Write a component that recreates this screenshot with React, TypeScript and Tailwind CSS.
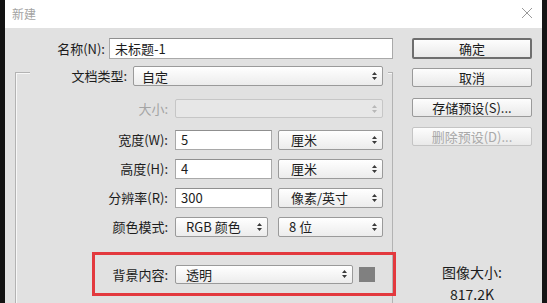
import type { ReactNode } from "react";

function Arrows({ disabled = false }: { disabled?: boolean }) {
  return (
    <svg width="5" height="8" viewBox="0 0 5 8" className="shrink-0">
      <path
        d="M2.5 0 L5 3 H0 Z M2.5 8 L5 5 H0 Z"
        fill={disabled ? "#b8b8b8" : "#3a3a3a"}
      />
    </svg>
  );
}

function Select({
  children,
  className = "",
  disabled = false,
}: {
  children?: ReactNode;
  className?: string;
  disabled?: boolean;
}) {
  return (
    <div
      className={`flex items-center justify-between rounded-[2px] border pr-[5px] ${
        disabled
          ? "border-[#c6c6c6] bg-[#e7e7e7]"
          : "border-[#9a9a9a] bg-[linear-gradient(#ffffff,#ececec)]"
      } ${className}`}
    >
      <span className="whitespace-nowrap leading-none">{children}</span>
      <Arrows disabled={disabled} />
    </div>
  );
}

function Input({ value, className = "" }: { value: string; className?: string }) {
  return (
    <div
      className={`flex items-center border border-[#a9a9a9] border-t-[#8f8f8f] bg-white pl-[5px] leading-none ${className}`}
    >
      {value}
    </div>
  );
}

function Button({
  children,
  primary = false,
  disabled = false,
  className = "",
}: {
  children: ReactNode;
  primary?: boolean;
  disabled?: boolean;
  className?: string;
}) {
  return (
    <div
      className={`flex w-[120px] items-center justify-center rounded-[2px] bg-[linear-gradient(#fdfdfd,#e9e9e9)] leading-none ${
        primary
          ? "border-2 border-[#6e6e6e]"
          : disabled
            ? "border border-[#c4c4c4] text-[#a9a9a9]"
            : "border border-[#9a9a9a]"
      } ${className}`}
    >
      {children}
    </div>
  );
}

function Label({ children, className = "" }: { children: ReactNode; className?: string }) {
  return <span className={`shrink-0 text-right ${className}`}>{children}</span>;
}

export default function App() {
  return (
    <div className="flex h-[303px] w-[547px] overflow-hidden bg-[#121212] font-['Noto_Sans_CJK_SC','Noto_Sans',sans-serif] text-[13px] text-[#1c1c1c]">
      <div className="ml-[5px] flex w-[537px] flex-col">
        {/* title bar */}
        <div className="flex h-[28px] shrink-0 items-center justify-between bg-white pl-[7px] pr-[9px]">
          <span className="text-[12px] text-[#a3a3a3]">新建</span>
          <svg width="12" height="12" viewBox="0 0 12 12" className="mb-[2px]">
            <path d="M1 1 L11 11 M11 1 L1 11" stroke="#9a9a9a" strokeWidth="1" />
          </svg>
        </div>

        <div className="relative flex flex-1 overflow-hidden bg-[#e1e1e1]">
          {/* left column */}
          <div className="flex w-[395px] shrink-0 flex-col">
            <div className="mt-[10px] flex items-center">
              <Label className="w-[104px] pr-[4px]">名称(N):</Label>
              <Input value="未标题-1" className="h-[21px] w-[284px]" />
            </div>

            <div className="ml-[10px] mt-[13px] flex w-[378px] flex-col border-l border-r border-t border-[#b3b3b3] pb-[40px] shadow-[inset_1px_1px_0_#f7f7f7]">
              <div className="-mt-[7px] flex">
                <div className="ml-[14px] flex items-center bg-[#e1e1e1] pr-[5px]">
                  <Label className="w-[103px] pr-[6px]">文档类型:</Label>
                  <Select className="h-[20px] w-[250px] pl-[8px]">自定</Select>
                </div>
              </div>

              <div className="mt-[13px] flex items-center">
                <Label className="w-[159px] pr-[7px] text-[#a4a4a4]">大小:</Label>
                <Select disabled className="h-[19px] w-[208px]" />
              </div>

              <div className="mt-[11px] flex items-center">
                <Label className="w-[159px] pr-[7px]">宽度(W):</Label>
                <Input value="5" className="h-[20px] w-[97px]" />
                <Select className="ml-[6px] h-[20px] w-[105px] pl-[12px]">厘米</Select>
              </div>

              <div className="mt-[9px] flex items-center">
                <Label className="w-[159px] pr-[7px]">高度(H):</Label>
                <Input value="4" className="h-[20px] w-[97px]" />
                <Select className="ml-[6px] h-[20px] w-[105px] pl-[12px]">厘米</Select>
              </div>

              <div className="mt-[9px] flex items-center">
                <Label className="w-[159px] pr-[7px]">分辨率(R):</Label>
                <Input value="300" className="h-[20px] w-[97px]" />
                <Select className="ml-[6px] h-[20px] w-[105px] pl-[12px]">像素/英寸</Select>
              </div>

              <div className="mt-[9px] flex items-center">
                <Label className="w-[159px] pr-[7px]">颜色模式:</Label>
                <Select className="h-[20px] w-[93px] pl-[10px]">RGB 颜色</Select>
                <Select className="ml-[10px] h-[20px] w-[105px] pl-[10px]">8 位</Select>
              </div>

              <div className="mt-[28px] flex items-center">
                <Label className="w-[159px] pr-[7px]">背景内容:</Label>
                <Select className="h-[19px] w-[178px] pl-[10px]">透明</Select>
                <div className="ml-[6px] h-[15px] w-[16px] bg-[#808080]" />
              </div>
            </div>
          </div>

          {/* right column */}
          <div className="ml-[12px] flex flex-col pt-[10px]">
            <Button primary className="h-[22px]">确定</Button>
            <Button className="mt-[9px] h-[20px]">取消</Button>
            <Button className="mt-[11px] h-[20px]">存储预设(S)...</Button>
            <Button disabled className="mt-[10px] h-[20px]">删除预设(D)...</Button>
            <div className="mt-[117px] text-center text-[14px] leading-[18px]">图像大小:</div>
            <div className="mt-[4px] text-center text-[14px] leading-[18px]">817.2K</div>
          </div>

          {/* red annotation */}
          <div className="absolute left-[87px] top-[224px] h-[44px] w-[304px] border-[3px] border-[#e3393e]" />
        </div>
      </div>
      <div className="flex-1 bg-[#151515]" />
    </div>
  );
}
